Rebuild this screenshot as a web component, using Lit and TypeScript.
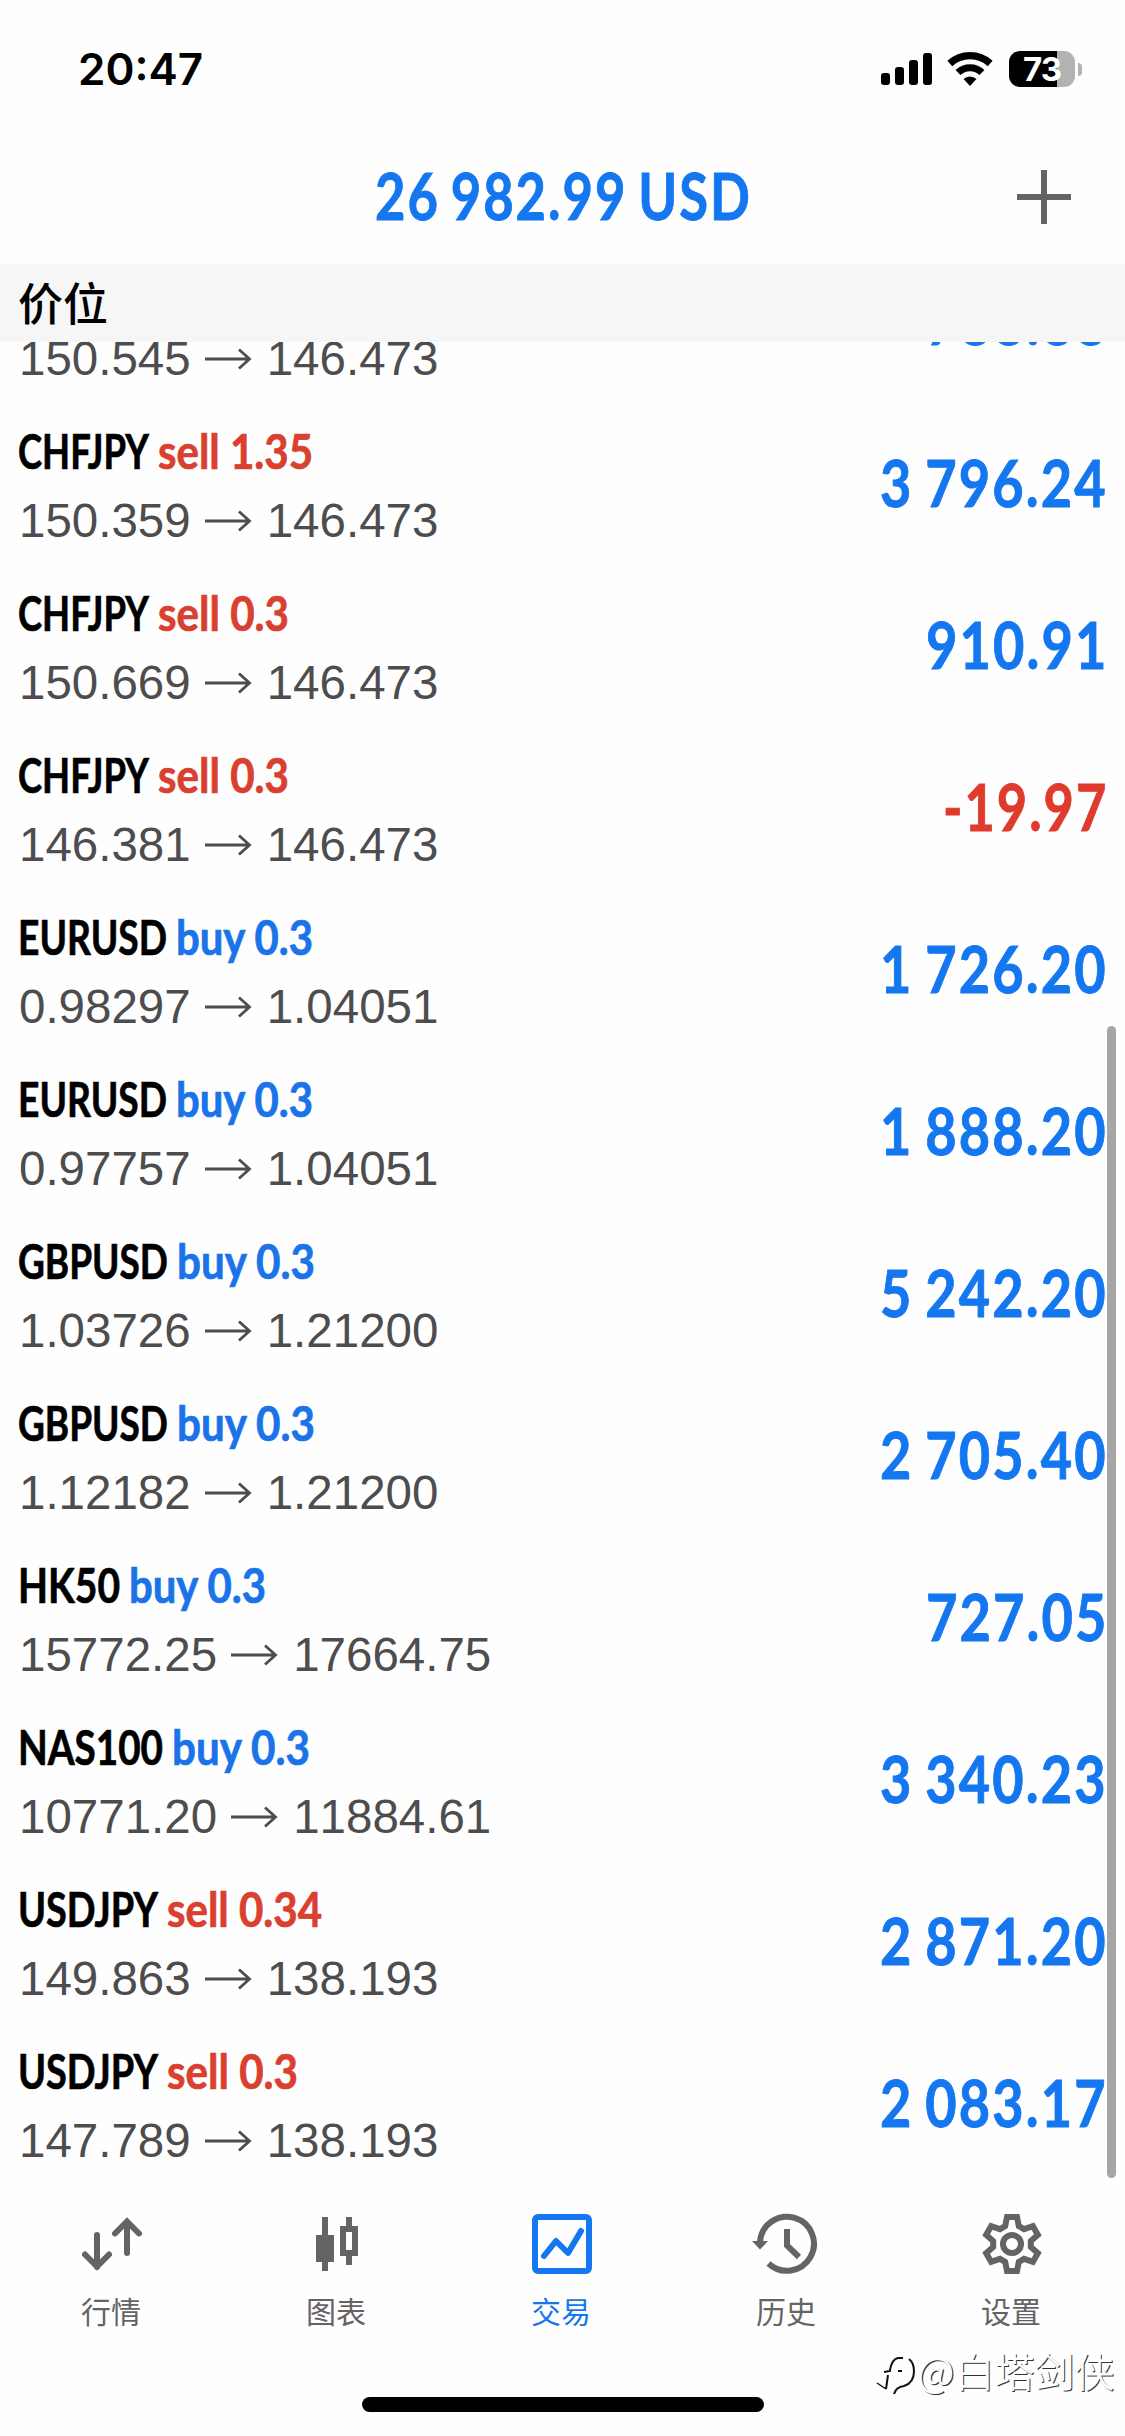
import { LitElement, html, css, svg } from "lit";
import { customElement, property } from "lit/decorators.js";

/* One line of condensed text, squeezed so that it fills a given width. */
@customElement("fit-text")
class FitText extends LitElement {
  @property({ type: Number }) width = 100;
  @property() text = "";

  static styles = css`
    :host { display: inline-block; white-space: pre; flex: none; }
    .glyphs { display: inline-block; transform-origin: 0 50%; white-space: pre; }
  `;

  updated() {
    const span = this.renderRoot.querySelector(".glyphs") as HTMLElement;
    span.style.transform = "none";
    const natural = span.getBoundingClientRect().width;
    this.style.width = `${this.width}px`;
    span.style.transform = `scaleX(${this.width / natural})`;
  }

  render() {
    return html`<span class="glyphs">${this.text}</span>`;
  }
}

interface Position {
  symbol: string;
  symbolWidth: number;
  side: "buy" | "sell";
  lots: string;
  orderWidth: number;
  open: string;
  current: string;
  profit: string;
}

const p = (symbol: string, symbolWidth: number, side: "buy" | "sell", lots: string,
  orderWidth: number, open: string, current: string, profit: string): Position =>
  ({ symbol, symbolWidth, side, lots, orderWidth, open, current, profit });

/* The first row is scrolled under the section header; its order line is out of view. */
const positions: Position[] = [
  p("", 0, "sell", "", 0, "150.545", "146.473", "788.88"),
  p("CHFJPY", 131, "sell", "1.35", 155, "150.359", "146.473", "3 796.24"),
  p("CHFJPY", 131, "sell", "0.3", 131, "150.669", "146.473", "910.91"),
  p("CHFJPY", 131, "sell", "0.3", 131, "146.381", "146.473", "-19.97"),
  p("EURUSD", 149, "buy", "0.3", 137, "0.98297", "1.04051", "1 726.20"),
  p("EURUSD", 149, "buy", "0.3", 137, "0.97757", "1.04051", "1 888.20"),
  p("GBPUSD", 150, "buy", "0.3", 138, "1.03726", "1.21200", "5 242.20"),
  p("GBPUSD", 150, "buy", "0.3", 138, "1.12182", "1.21200", "2 705.40"),
  p("HK50", 102, "buy", "0.3", 137, "15772.25", "17664.75", "727.05"),
  p("NAS100", 145, "buy", "0.3", 138, "10771.20", "11884.61", "3 340.23"),
  p("USDJPY", 140, "sell", "0.34", 155, "149.863", "138.193", "2 871.20"),
  p("USDJPY", 140, "sell", "0.3", 131, "147.789", "138.193", "2 083.17"),
];

/* Advance width of an amount: digits, points, spaces and minus signs. */
const amountWidth = (s: string) =>
  [...s].reduce((w, c) => w + (c === "." ? 16.4 : c === " " ? 12 : c === "-" ? 16 : 33.2), 0);

const gearPath = () => {
  const tooth = [[-6.8, -17.8], [-5, -27], [5, -27], [6.8, -17.8]];
  const points: string[] = [];
  for (let i = 0; i < 6; i++) {
    const a = (i * Math.PI) / 3;
    for (const [x, y] of tooth) {
      points.push(`${(x * Math.cos(a) - y * Math.sin(a)).toFixed(2)},${(x * Math.sin(a) + y * Math.cos(a)).toFixed(2)}`);
    }
  }
  return `M${points.join("L")}Z`;
};

const tabs = [
  { label: "行情", active: false, icon: svg`
    <path d="M-15-9V23M-27 10.500l12 12L-3 10.500M15 9V-22M3-10.500L15-22.500 27-10.500"
      fill="none" stroke="currentColor" stroke-width="6" stroke-linecap="round" stroke-linejoin="miter"/>` },
  { label: "图表", active: false, icon: svg`
    <path d="M-15-27h6V-9h6V18h-6v9h-6v-9h-6V-9h6z" fill="currentColor"/>
    <path d="M9-27h6v9h6v30h-6v9H9v-9H3v-30h6zM9-12V6h6V-12z" fill="currentColor" fill-rule="evenodd"/>` },
  { label: "交易", active: true, icon: svg`
    <rect x="-27" y="-27" width="54" height="54" rx="3" fill="none" stroke="currentColor" stroke-width="6"/>
    <path d="M-18 12L-6-3 6 9 19-13" fill="none" stroke="currentColor" stroke-width="6" stroke-linecap="round" stroke-linejoin="round"/>` },
  { label: "历史", active: false, icon: svg`
    <path d="M-27-2A27 27 0 1 1-18.500 19.500" fill="none" stroke="currentColor" stroke-width="6"/>
    <path d="M-35-3h16l-8 8.500z" fill="currentColor"/>
    <path d="M0-15V1.500L12 13" fill="none" stroke="currentColor" stroke-width="6"/>` },
  { label: "设置", active: false, icon: svg`
    <g fill="none" stroke="currentColor" stroke-width="6">
      <path d=${gearPath()} /><circle r="9"/></g>` },
];

@customElement("app-root")
class AppRoot extends LitElement {
  static styles = css`
    :host {
      display: flex; flex-direction: column; position: relative; overflow: hidden;
      width: 1125px; height: 2436px; background: #fefefe; color: #000;
      font-family: Lato, "Noto Sans CJK SC", sans-serif;
    }
    .status {
      flex: none; height: 138px; box-sizing: border-box; padding: 0 43px 0 78px;
      display: flex; justify-content: space-between; align-items: center;
    }
    .time { font: 600 44px/60px Inter, sans-serif; }
    .indicators { display: flex; align-items: center; }
    .signal { margin-right: 14px; }
    .wifi { margin-right: 16px; }
    .battery { display: flex; align-items: center; gap: 3px; }
    .level {
      width: 66px; height: 36px; border-radius: 11px;
      background: linear-gradient(90deg, #000 73%, #b2b2b2 73%);
      color: #fff; font: 700 33px/36px Inter, sans-serif; text-align: center; letter-spacing: -1px;
    }
    .cap { width: 4px; height: 13px; border-radius: 0 5px 5px 0; background: #b2b2b2; }
    .nav {
      flex: none; height: 126px; display: grid; grid-template-columns: 1fr auto 1fr;
      align-items: center; box-sizing: border-box; padding: 0 54px 8px;
    }
    .total {
      grid-column: 2; color: #1577f0; font: 700 65px/80px Lato, sans-serif; padding: 0 0 5px 2px;
      letter-spacing: 2.500px; word-spacing: -5px; -webkit-text-stroke: .9px currentColor;
    }
    .add { justify-self: end; display: block; }
    .section {
      flex: none; height: 78px; box-sizing: border-box; padding-left: 18px; background: #f6f6f6;
      font: 500 45px/76px "Noto Sans CJK SC", sans-serif;
    }
    .list { flex: none; height: 1845px; overflow: hidden; display: flex; flex-direction: column; justify-content: flex-end; }
    .row { flex: none; height: 162px; display: flex; justify-content: space-between; align-items: center; padding: 0 17px 0 18px; }
    .details { display: flex; flex-direction: column; }
    .order {
      display: flex; gap: 8.500px; height: 68px; font: 700 47px/69px Lato, sans-serif;
      -webkit-text-stroke: .7px currentColor;
    }
    .prices {
      display: flex; align-items: center; color: #4d4d4f; padding: 1px 0 0 1px;
      font: 400 47.500px/70px "Liberation Sans", sans-serif; font-kerning: none;
    }
    .arrow { display: block; margin: 0 15px 0 13px; }
    .profit {
      font: 700 65px/80px Lato, sans-serif; color: #1577f0; padding-bottom: 8px;
      letter-spacing: 2.500px; word-spacing: -4px; -webkit-text-stroke: .9px currentColor;
    }
    .buy { color: #1a73e8; }
    .sell { color: #d9402f; }
    .profit.loss { color: #e03a2c; }
    .tabs { flex: none; height: 249px; display: grid; grid-template-columns: repeat(5, 1fr); align-items: start; }
    .tab { display: flex; flex-direction: column; align-items: center; color: #646464; padding: 20px 1px 0 0; }
    .tab.active { color: #1577f0; }
    .tab svg { display: block; }
    .label { font: 400 30px/44px "Noto Sans CJK SC", sans-serif; margin: 7px 2px 0 0; }
    .scrollbar { position: absolute; left: 1107px; top: 1026px; width: 9px; height: 1152px; border-radius: 5px; background: #a6a6a6; }
    .home { position: absolute; left: 362px; top: 2397px; width: 402px; height: 15px; border-radius: 8px; background: #000; }
    .mark { position: absolute; left: 876px; top: 2341px; display: flex; align-items: center; }
    .author {
      font: 350 40px/58px "Noto Sans CJK SC", sans-serif; color: #fefefe; margin-left: -1px;
      text-shadow: 1.200px 1.200px .5px #333;
    }
  `;

  render() {
    return html`
      <header class="status">
        <span class="time">20:47</span>
        <span class="indicators">
          <svg class="signal" width="52" height="36" viewBox="0 0 52 36">
            <rect x="0" y="22" width="9" height="12" rx="3"/><rect x="14" y="16" width="9" height="18" rx="3"/>
            <rect x="28" y="9" width="9" height="25" rx="3"/><rect x="42" y="2" width="9" height="32" rx="3"/>
          </svg>
          <svg class="wifi" width="46" height="36" viewBox="0 0 46 36">
            <g fill="none" stroke="#000" stroke-width="7.200">
              <path d="M2.800 12.500A30 30 0 0 1 43.200 12.500"/><path d="M11 21.500A17.500 17.500 0 0 1 35 21.500"/>
            </g>
            <path d="M16.500 28a9.500 9.500 0 0 1 13 0L23 35z"/>
          </svg>
          <span class="battery"><span class="level">73</span><span class="cap"></span></span>
        </span>
      </header>
      <div class="nav">
        <fit-text class="total" text="26 982.99 USD" .width=${377}></fit-text>
        <svg class="add" width="54" height="54" viewBox="0 0 54 54"><path d="M24 0h6v24h24v6H30v24h-6V30H0v-6h24z" fill="#646464"/></svg>
      </div>
      <div class="section">价位</div>
      <div class="list">
        ${positions.map((r) => html`
          <div class="row">
            <div class="details">
              <div class="order">
                ${r.symbol ? html`
                  <fit-text text=${r.symbol} .width=${r.symbolWidth}></fit-text>
                  <fit-text class=${r.side} text=${`${r.side} ${r.lots}`} .width=${r.orderWidth}></fit-text>` : ""}
              </div>
              <div class="prices">
                <span>${r.open}</span>
                <svg class="arrow" width="48" height="24" viewBox="0 0 48 24">
                  <path d="M1 12H45M35 2.500L45.500 12 35 21.500" fill="none" stroke="currentColor" stroke-width="2.800"/>
                </svg>
                <span>${r.current}</span>
              </div>
            </div>
            <fit-text class="profit ${r.profit.startsWith("-") ? "loss" : ""}" text=${r.profit} .width=${amountWidth(r.profit)}></fit-text>
          </div>`)}
      </div>
      <nav class="tabs">
        ${tabs.map((t) => html`
          <div class="tab ${t.active ? "active" : ""}">
            <svg width="76" height="74" viewBox="-38 -37 76 74">${t.icon}</svg>
            <span class="label">${t.label}</span>
          </div>`)}
      </nav>
      <div class="scrollbar"></div>
      <div class="home"></div>
      <div class="mark">
        <svg width="42" height="54" viewBox="0 0 42 54">
          <g fill="none" stroke="#111" stroke-width="2">
            <path d="M27 15h-5q-6 1-8 12v1l-6 1M22 28h4M12 32L10 46"/>
            <path d="M10 46L1 40" stroke-width="1.500"/>
            <path d="M33 16q5 4 5 12 0 12-10 15-8 1-10 8"/>
          </g>
        </svg>
        <span class="author">@白塔剑侠</span>
      </div>
    `;
  }
}
